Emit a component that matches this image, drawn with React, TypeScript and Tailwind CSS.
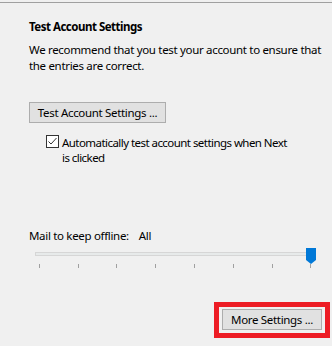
const ticks = [39, 78, 116, 155, 194, 233, 272, 310];

const App = () => (
  <div
    className="h-[346px] w-[332px] overflow-hidden bg-[#f0f0f0] text-[11.5px] tracking-[-0.32px] text-black"
    style={{ fontFamily: '"Noto Sans", "Open Sans", sans-serif' }}
  >
    <div className="mt-[2px] border-t border-[#a0a0a0]" />
    <div className="pl-[29px] pt-[16px]">
      <div className="font-bold leading-[16px] tracking-[-0.5px]">Test Account Settings</div>
      <p className="mt-[7px] whitespace-nowrap leading-[16px]">
        We recommend that you test your account to ensure that
        <br />
        the entries are correct.
      </p>
      <button className="mt-[28px] flex h-[21px] w-[137px] items-center justify-center border border-[#adadad] bg-[#e1e1e1] leading-none">
        Test Account Settings ...
      </button>
      <div className="mt-[12px] flex items-start pl-[17px]">
        <div className="flex h-[13px] w-[13px] shrink-0 items-center justify-center border border-[#333] bg-white">
          <svg width="11" height="11" viewBox="0 0 11 11">
            <path d="M1.5 5.5 L4 8 L9.5 2" fill="none" stroke="#333" strokeWidth="1" />
          </svg>
        </div>
        <div className="ml-[3px] whitespace-nowrap leading-[15px] tracking-[-0.55px]">
          Automatically test account settings when Next
          <br />
          is clicked
        </div>
      </div>
      <div className="mt-[63px] flex leading-[16px]">
        <span>Mail to keep offline:</span>
        <span className="ml-[10px]">All</span>
      </div>
    </div>
    <div className="relative mt-[8px] h-[20px]">
      <div className="absolute left-[35px] top-[0px] h-[4px] w-[277px] border border-[#d6d6d6] bg-[#e7eaea]" />
      <svg className="absolute left-[306px] top-[-4px]" width="10" height="16" viewBox="0 0 10 16">
        <path d="M0 0 H10 V12 L5 16 L0 12 Z" fill="#0078d7" />
      </svg>
      {ticks.map((x) => (
        <div
          key={x}
          className="absolute top-[12px] h-[4px] w-[1px] bg-[#a0a0a0]"
          style={{ left: x }}
        />
      ))}
    </div>
    <div className="mt-[30px] flex justify-end pr-[2px]">
      <div className="border-[5px] border-[#ed1c24] px-[3px] pt-[2px] pb-[3px]">
        <button className="flex h-[21px] w-[100px] items-center justify-center border border-[#adadad] bg-[#e1e1e1] leading-none">
          More Settings ...
        </button>
      </div>
    </div>
  </div>
);

export default App;
